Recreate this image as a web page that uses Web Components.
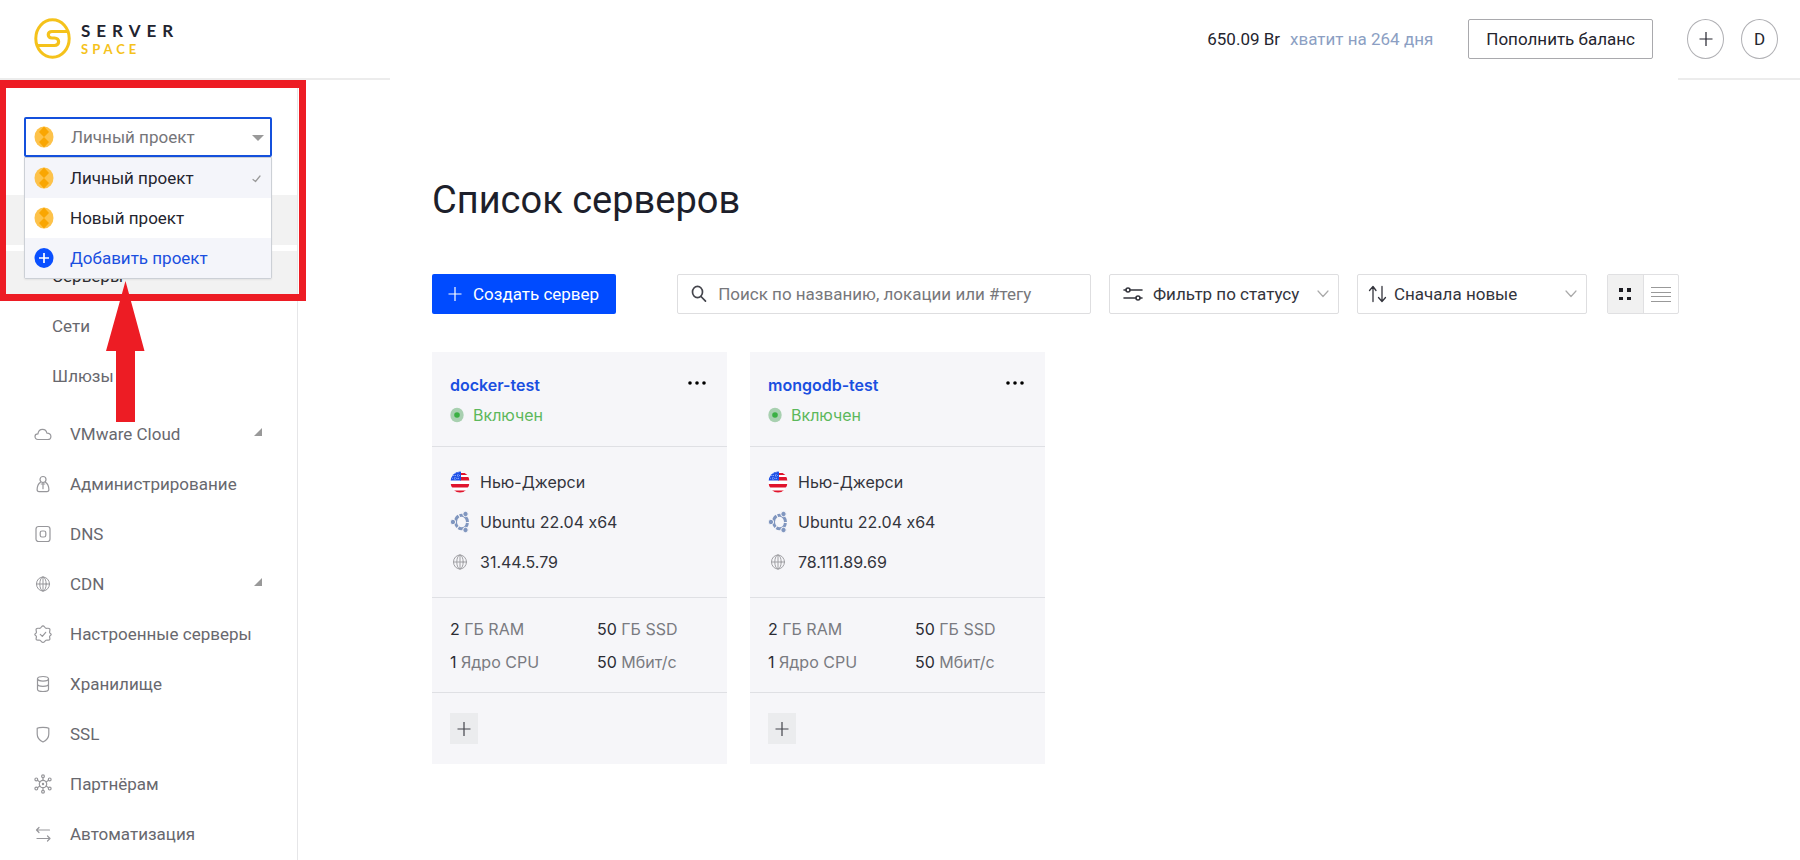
<!DOCTYPE html>
<html lang="ru">
<head>
<meta charset="utf-8">
<meta name="viewport" content="width=device-width, initial-scale=1">
<title>Serverspace</title>
<style>
  body { margin: 0; background: #fff; color: #24242e; font: 17px/24px Roboto, "Liberation Sans", sans-serif; }
</style>
</head>
<body>
<app-shell>
  <top-bar slot="header" balance="650.09 Br" forecast="хватит на 264 дня" user="D"></top-bar>
  <side-nav slot="nav">
    <project-picker slot="picker"></project-picker>
    <nav-item slot="sub" active>Серверы</nav-item>
    <nav-item slot="sub">Сети</nav-item>
    <nav-item slot="sub">Шлюзы</nav-item>
    <nav-item icon="cloud" expandable>VMware Cloud</nav-item>
    <nav-item icon="admin">Администрирование</nav-item>
    <nav-item icon="dns">DNS</nav-item>
    <nav-item icon="globe" expandable>CDN</nav-item>
    <nav-item icon="badge">Настроенные серверы</nav-item>
    <nav-item icon="storage">Хранилище</nav-item>
    <nav-item icon="shield">SSL</nav-item>
    <nav-item icon="partners">Партнёрам</nav-item>
    <nav-item icon="arrows">Автоматизация</nav-item>
  </side-nav>
  <server-toolbar></server-toolbar>
  <server-grid>
    <server-card name="docker-test" ip="31.44.5.79"></server-card>
    <server-card name="mongodb-test" ip="78.111.89.69"></server-card>
  </server-grid>
  <callout-mark slot="overlay"></callout-mark>
</app-shell>

<script>
const line = (w, h, body, sw = 1.2) =>
  `<svg width="${w}" height="${h}" viewBox="0 0 ${w} ${h}" fill="none" stroke="currentColor" stroke-width="${sw}" stroke-linecap="round" stroke-linejoin="round" aria-hidden="true">${body}</svg>`;
const fill = (w, h, body) =>
  `<svg width="${w}" height="${h}" viewBox="0 0 ${w} ${h}" aria-hidden="true">${body}</svg>`;

const ICONS = {
  cloud: line(18, 18, '<path d="M4 14.500C2 14.500 1 13.200 1 11.600 1 10 2.200 8.900 3.900 8.900 4.300 6 6.100 4.300 8.500 4.300c2.500 0 4 1.600 4.400 3.900 2.400-.1 4 1.200 4 3.200 0 1.900-1.300 3.100-3.200 3.100z"/>'),
  admin: line(18, 18, '<circle cx="9" cy="4.500" r="3"/><path d="M6.500 7.200C4.500 8.500 3.200 11.500 3.100 14.500c0 1.500.7 2.200 2 2.200h7.800c1.300 0 2-.7 2-2.200-.1-3-1.400-6-3.400-7.300M9 7.500v6.200M7.300 9h3.400"/>'),
  dns: line(18, 18, '<rect x="2" y="1.500" width="14" height="15" rx="2.500"/><rect x="6.200" y="6" width="5.600" height="6" rx="1.800"/>'),
  globe: line(18, 18, '<ellipse cx="9" cy="9" rx="6.500" ry="7"/><ellipse cx="9" cy="9" rx="3.200" ry="7"/><path d="M2.500 9h13M9 2v14"/>', 1),
  badge: line(18, 18, '<path d="M9 .8c1.300 0 1.700 1.900 2.900 2.400 1.200.4 3-.5 3.800.6.800 1.100-.3 2.400-.1 3.700.1.900 1.600 1 1.600 2s-1.500 1.100-1.600 2c-.2 1.200.8 2.200.1 3.100-.8 1.100-2.500.1-3.700.6-1.200.6-1.600 2.200-3 2.200s-1.800-1.600-3-2.200c-1.200-.5-2.900.5-3.700-.6-.7-.9.300-1.900.1-3.100C2.300 10.600.8 10.500.8 9.500s1.500-1.100 1.600-2C2.600 6.200 1.500 4.900 2.300 3.800c.8-1.100 2.600-.2 3.800-.6C7.300 2.700 7.700.8 9 .8z"/><path d="M6.300 9.300l2 2 3.400-4"/>'),
  storage: line(18, 18, '<ellipse cx="9" cy="3.800" rx="5.500" ry="2.300"/><path d="M3.500 3.800v10.400c0 1.300 2.400 2.300 5.500 2.300s5.500-1 5.500-2.300V3.800M3.500 9c0 1.300 2.400 2.300 5.500 2.300s5.500-1 5.500-2.300"/>'),
  shield: line(18, 18, '<path d="M3.200 3.200C5 2 13 2 14.800 3.200V9c0 4-2.500 6.500-5.800 8-3.300-1.500-5.800-4-5.800-8z"/>'),
  partners: line(18, 20, '<circle cx="9" cy="10" r="3.700"/><circle cx="9" cy="10" r=".6"/><circle cx="9" cy="2.200" r="1.400"/><circle cx="9" cy="17.800" r="1.400"/><circle cx="2.300" cy="5.400" r="1.400"/><circle cx="15.700" cy="5.400" r="1.400"/><circle cx="2.300" cy="14.600" r="1.400"/><circle cx="15.700" cy="14.600" r="1.400"/><path d="M9 3.600v2.700M9 13.700v2.700M3.400 6.300l2.500 1.600M14.600 6.300l-2.500 1.600M3.400 13.700l2.500-1.600M14.600 13.700l-2.500-1.600"/>'),
  arrows: line(18, 18, '<path d="M15.500 5H2.500M5 2.500L2.500 5 5 7.500M3 13.500h13M13.500 11l2.500 2.500-2.500 2.500"/>'),
  coin: fill(20, 22, '<ellipse cx="10" cy="11" rx="9.500" ry="10.500" fill="#fdc24a"/><path d="M10 .5l5 5.500-5 5-5-5zM10 11l5 5-5 5.500L5 16z" fill="#f9a602"/>'),
  add: fill(20, 22, '<ellipse cx="10" cy="11" rx="9.500" ry="10" fill="#0a50ff"/><path d="M10 6v10M5 11h10" stroke="#fff" stroke-width="1.700"/>'),
  check: line(9, 9, '<path d="M1 5.500L3.500 7.500 8 2"/>'),
  plus: line(14, 14, '<path d="M7 0v14M.500 7h13" stroke-linecap="butt"/>', 1.2),
  search: line(16, 18, '<ellipse cx="6.500" cy="7" rx="5" ry="5.700"/><path d="M10 11.500l4.500 4.700"/>', 1.7),
  sliders: line(20, 16, '<circle cx="5" cy="4" r="2"/><circle cx="15" cy="12" r="2"/><path d="M7.500 4H19M1 4h1.500M1 12h11.500M17.500 12H19"/>', 1.6),
  sort: line(20, 18, '<path d="M5 16.500V2M1.500 5.500L5 1.500l3 4M14 1.500V16M10.500 12.500L14 16.500l3.500-4"/>', 1.3),
  chevron: line(12, 8, '<path d="M1 1l5 5.500L11 1"/>', 1.2),
  grid: fill(14, 14, '<path d="M1 1h4v4H1zM9 1h4v4H9zM1 10h4v3H1zM9 10h4v3H9z" fill="#1c1c22"/>'),
  rows: line(20, 16, '<path d="M0 1.500h20M0 6.500h20M0 10.500h20M0 15.500h20" stroke-linecap="butt"/>', 1.2),
  dots: fill(18, 6, '<circle cx="2" cy="3" r="1.800"/><circle cx="9" cy="3" r="1.800"/><circle cx="16" cy="3" r="1.800"/>'),
  online: fill(14, 16, '<ellipse cx="7" cy="8" rx="6.700" ry="7.300" fill="#a8d0b0"/><circle cx="7" cy="8" r="2.800" fill="#3bb044"/>'),
  flag: fill(20, 22, '<clipPath id="r"><ellipse cx="10" cy="11" rx="9.500" ry="10.500"/></clipPath><g clip-path="url(#r)"><path d="M0 0h20v22H0z" fill="#fff"/><path d="M10 2h10v2H10zM10 6h10v3.500H10zM0 13h20v3.500H0zM0 19.500h20V22H0z" fill="#e0142d"/><path d="M0 0h11v9.500H0z" fill="#1e50e6"/><path d="M3 4.500h7M2 7.300h8M5 2v7M8 1v8" stroke="#a9c0ff" stroke-width=".7" stroke-dasharray="1 1"/></g>'),
  ubuntu: fill(20, 22, '<ellipse cx="11.500" cy="11" rx="6" ry="6.800" fill="none" stroke="#8096bf" stroke-width="3" stroke-dasharray="12.200 1.200" stroke-dashoffset="-1"/><g fill="#8096bf" stroke="#f6f6f9"><circle cx="2.900" cy="11" r="2.700"/><circle cx="15.500" cy="3" r="2.700"/><circle cx="15.500" cy="19" r="2.700"/></g>')
};

const define = (tag, css, html) => {
  customElements.define(tag, class extends HTMLElement {
    connectedCallback() {
      if (this.shadowRoot) return;
      const t = document.createElement('template');
      t.innerHTML = `<style>*{box-sizing:border-box}button,input,select{font:inherit;color:inherit;margin:0;padding:0;border:0;background:none;border-radius:0;outline:0}${css}</style>${typeof html === 'function' ? html(this) : html}`;
      this.attachShadow({ mode: 'open' }).append(t.content.cloneNode(true));
    }
  });
};

define('ui-icon', ':host{display:inline-flex;flex:none}svg{display:block}', el => ICONS[el.getAttribute('name')]);

define('app-shell', `
  :host{display:grid;position:relative;grid-template:auto 1fr / 298px 1fr;min-height:100vh}
  ::slotted([slot=header]){grid-column:1 / -1}
  main{padding:98px 121px 40px 134px;min-width:0}
  h1{margin:0 0 51px;font-weight:400;font-size:38px;line-height:45px;color:#1d1f2b}`,
  `<slot name="header"></slot><slot name="nav"></slot>
   <main><h1>Список серверов</h1><slot></slot></main><slot name="overlay"></slot>`);

define('brand-logo', `
  :host{display:block}
  a{display:flex;align-items:center;gap:10px;text-decoration:none}
  svg{display:block}
  .words{display:flex;flex-direction:column;font-family:Lato,sans-serif;font-weight:700;color:#1f2430}
  .server{font-size:17px;line-height:20px;letter-spacing:6px}
  .space{font-size:13px;line-height:16px;letter-spacing:4px;color:#f5c21b}`,
  `<a href="#"><svg width="37" height="41" viewBox="0 0 37 41" fill="none" stroke="#f5c21b" stroke-width="3" aria-hidden="true">
     <ellipse cx="18.500" cy="20.500" rx="16.700" ry="18.700"/>
     <path d="M34 13.500H18c-5 0-5 6.500 0 6.500h2.500c5.500 0 5.500 7.500 0 7.500H3.500" stroke-width="3.200"/></svg>
     <span class="words"><span class="server">SERVER</span><span class="space">SPACE</span></span></a>`);

define('top-bar', `
  :host{display:flex;align-items:stretch;height:80px}
  .brand{width:390px;padding:18px 0 0 34px;border-bottom:2px solid #ececec}
  .balance{display:flex;align-items:center;gap:10px;margin-left:auto;padding-bottom:2px}
  .forecast{color:#8c9fc3}
  .pay{align-self:flex-start;height:40px;margin:19px 25px 0 35px;padding:0 17px;border:1px solid #a9a9ad;border-radius:2px;white-space:nowrap}
  .tools{display:flex;gap:17px;padding:19px 22px 0 9px;border-bottom:2px solid #ececec}
  .tools button{display:flex;align-items:center;justify-content:center;width:37px;height:40px;border:1px solid #b0b0b4;border-radius:50%}`,
  el => `<div class="brand"><brand-logo></brand-logo></div>
    <div class="balance"><span>${el.getAttribute('balance')}</span><span class="forecast">${el.getAttribute('forecast')}</span></div>
    <button class="pay">Пополнить баланс</button>
    <div class="tools"><button aria-label="Создать"><ui-icon name="plus"></ui-icon></button><button>${el.getAttribute('user')}</button></div>`);

define('project-picker', `
  :host{display:block;position:relative;margin:0 25px 0 24px}
  .field{position:relative;color:#757579}
  select{appearance:none;display:block;width:100%;height:40px;padding:0 40px 0 45px;border:2px solid #1450dc;border-radius:2px;background:#fff}
  .field ui-icon{position:absolute;left:10px;top:9px;pointer-events:none}
  .field::after{content:"";position:absolute;right:8px;top:18px;border:6px solid transparent;border-top:6px solid #999;border-bottom:0;pointer-events:none}
  ul{position:absolute;z-index:2;left:0;right:0;top:40px;margin:0;padding:0;list-style:none;background:#fff;border:1px solid #ccd0d6;border-radius:0 0 2px 2px;box-shadow:0 1px 2px #0001}
  li{height:40px}
  li:nth-child(odd){background:#f4f5fa}
  button{display:flex;align-items:center;width:100%;height:100%;padding:0 10px 0 9px;text-align:left}
  button span{flex:1;padding-left:16px}
  .check{color:#999}
  .new{color:#1a4fe0}`,
  `<div class="field"><ui-icon name="coin"></ui-icon>
     <select aria-label="Проект"><option>Личный проект</option><option>Новый проект</option></select></div>
   <ul><li><button><ui-icon name="coin"></ui-icon><span>Личный проект</span><ui-icon class="check" name="check"></ui-icon></button></li>
     <li><button><ui-icon name="coin"></ui-icon><span>Новый проект</span></button></li>
     <li><button class="new"><ui-icon name="add"></ui-icon><span>Добавить проект</span></button></li></ul>`);

define('nav-item', `
  :host{display:block;color:#68686e}
  a{display:flex;align-items:center;height:50px;padding:0 35px 0 34px;color:inherit;text-decoration:none;white-space:nowrap}
  ui-icon{width:18px;margin-right:18px;color:#97979b}
  :host([slot=sub]) a{padding-left:52px}
  :host([active]){background:#f2f2f2;color:#2c2c30}
  .caret{width:8px;height:8px;margin:0 0 4px auto;background:#999;clip-path:polygon(100% 0,100% 100%,0 100%)}`,
  el => `<a href="#">${el.hasAttribute('icon') ? `<ui-icon name="${el.getAttribute('icon')}"></ui-icon>` : ''}<slot></slot>${el.hasAttribute('expandable') ? '<span class="caret"></span>' : ''}</a>`);

define('side-nav', `
  :host{display:block;padding-top:37px;border-right:1px solid #e6e6e8}
  .current{height:50px;margin:38px 0 6px;background:#f2f2f2}
  .sub{margin-bottom:8px}`,
  `<slot name="picker"></slot><nav><div class="current"></div><div class="sub"><slot name="sub"></slot></div><slot></slot></nav>`);

define('select-box', `
  :host{display:block;position:relative;width:230px;color:#33343c}
  select{appearance:none;display:block;width:100%;height:40px;padding:0 30px 0 var(--inset,43px);border:1px solid #dedee0;border-radius:2px;background:#fff}
  ui-icon{position:absolute;top:50%;transform:translateY(-50%);pointer-events:none}
  .lead{left:var(--lead,14px)}
  .chevron{right:10px;color:#aaa}`,
  el => `<select aria-label="${el.getAttribute('value')}"><option>${el.getAttribute('value')}</option></select>
    <ui-icon class="lead" name="${el.getAttribute('icon')}"></ui-icon><ui-icon class="chevron" name="chevron"></ui-icon>`);

define('server-toolbar', `
  :host{display:flex;align-items:center;gap:18px;margin-bottom:38px}
  .create{display:flex;align-items:center;gap:11px;height:40px;margin-right:43px;padding:0 17px 0 16px;border-radius:2px;background:#004bff;color:#fff;white-space:nowrap}
  .search{position:relative;flex:1;min-width:0}
  .search ui-icon{position:absolute;left:14px;top:11px;color:#44454c;pointer-events:none}
  input{display:block;width:100%;height:40px;padding:0 12px 0 40px;border:1px solid #dedee0;border-radius:2px}
  input::placeholder{color:#77777b;opacity:1}
  .view{display:flex;width:72px;height:40px;margin-left:2px;border:1px solid #e0e0e2;border-radius:2px}
  .view button{flex:1;display:flex;align-items:center;justify-content:center;color:#999}
  .view button:first-child{background:#f1f1f1;border-right:1px solid #e0e0e2}
  .sort{--inset:36px;--lead:11px}`,
  `<button class="create"><ui-icon name="plus"></ui-icon>Создать сервер</button>
   <div class="search"><ui-icon name="search"></ui-icon><input type="text" aria-label="Поиск" placeholder="Поиск по названию, локации или #тегу"></div>
   <select-box icon="sliders" value="Фильтр по статусу"></select-box>
   <select-box class="sort" icon="sort" value="Сначала новые"></select-box>
   <div class="view"><button aria-label="Плитка"><ui-icon name="grid"></ui-icon></button><button aria-label="Список"><ui-icon name="rows"></ui-icon></button></div>`);

define('server-grid', ':host{display:grid;grid-template-columns:repeat(auto-fill,295px);gap:23px}', '<slot></slot>');

define('server-card', `
  :host{display:block;background:#f6f6f9;font-family:Inter,"Liberation Sans",sans-serif;font-size:16px;font-feature-settings:"calt" 0}
  section + section{border-top:1px solid #dfe0e4}
  .head{display:flex;justify-content:space-between;padding:18px 21px 16px 18px}
  .name{display:block;font-weight:600;line-height:30px;color:#1a4fe0;text-decoration:none}
  .status{display:flex;align-items:center;gap:9px;height:30px;color:#5cb85c}
  .more{display:flex;align-items:center;height:26px}
  ul{margin:0;padding:15px 18px;list-style:none}
  li{display:flex;align-items:center;height:40px;color:#33343c}
  li ui-icon{width:20px;margin-right:10px;justify-content:center;color:#a0a0a4}
  .specs{display:grid;grid-template-columns:147px 1fr;grid-auto-rows:33px;align-items:center;padding:14px 18px;color:#7a7b81}
  b{font-weight:400;color:#2a2b33}
  .tags{padding:20px 18px}
  .tags button{display:flex;align-items:center;justify-content:center;width:28px;height:31px;background:#ebecee;color:#44454c}`,
  el => `<section class="head"><div><a class="name" href="#">${el.getAttribute('name')}</a>
      <div class="status"><ui-icon name="online"></ui-icon>Включен</div></div>
      <button class="more" aria-label="Действия"><ui-icon name="dots"></ui-icon></button></section>
    <section><ul><li><ui-icon name="flag"></ui-icon>Нью-Джерси</li><li><ui-icon name="ubuntu"></ui-icon>Ubuntu 22.04 x64</li><li><ui-icon name="globe"></ui-icon>${el.getAttribute('ip')}</li></ul></section>
    <section class="specs"><span><b>2</b> ГБ RAM</span><span><b>50</b> ГБ SSD</span><span><b>1</b> Ядро CPU</span><span><b>50</b> Мбит/с</span></section>
    <section class="tags"><button aria-label="Добавить тег"><ui-icon name="plus"></ui-icon></button></section>`);

define('callout-mark', `
  :host{position:absolute;z-index:5;left:0;top:80px;pointer-events:none}
  .frame{width:306px;height:221px;border:solid #ed1c24;border-width:8px 7px 7px 6px}
  svg{position:absolute;left:106px;top:201px}`,
  `<div class="frame"></div><svg width="39" height="141" viewBox="0 0 39 141" aria-hidden="true"><path d="M19.500 0L38.500 70H29v71H10V70H0z" fill="#ed1c24"/></svg>`);
</script>
</body>
</html>
